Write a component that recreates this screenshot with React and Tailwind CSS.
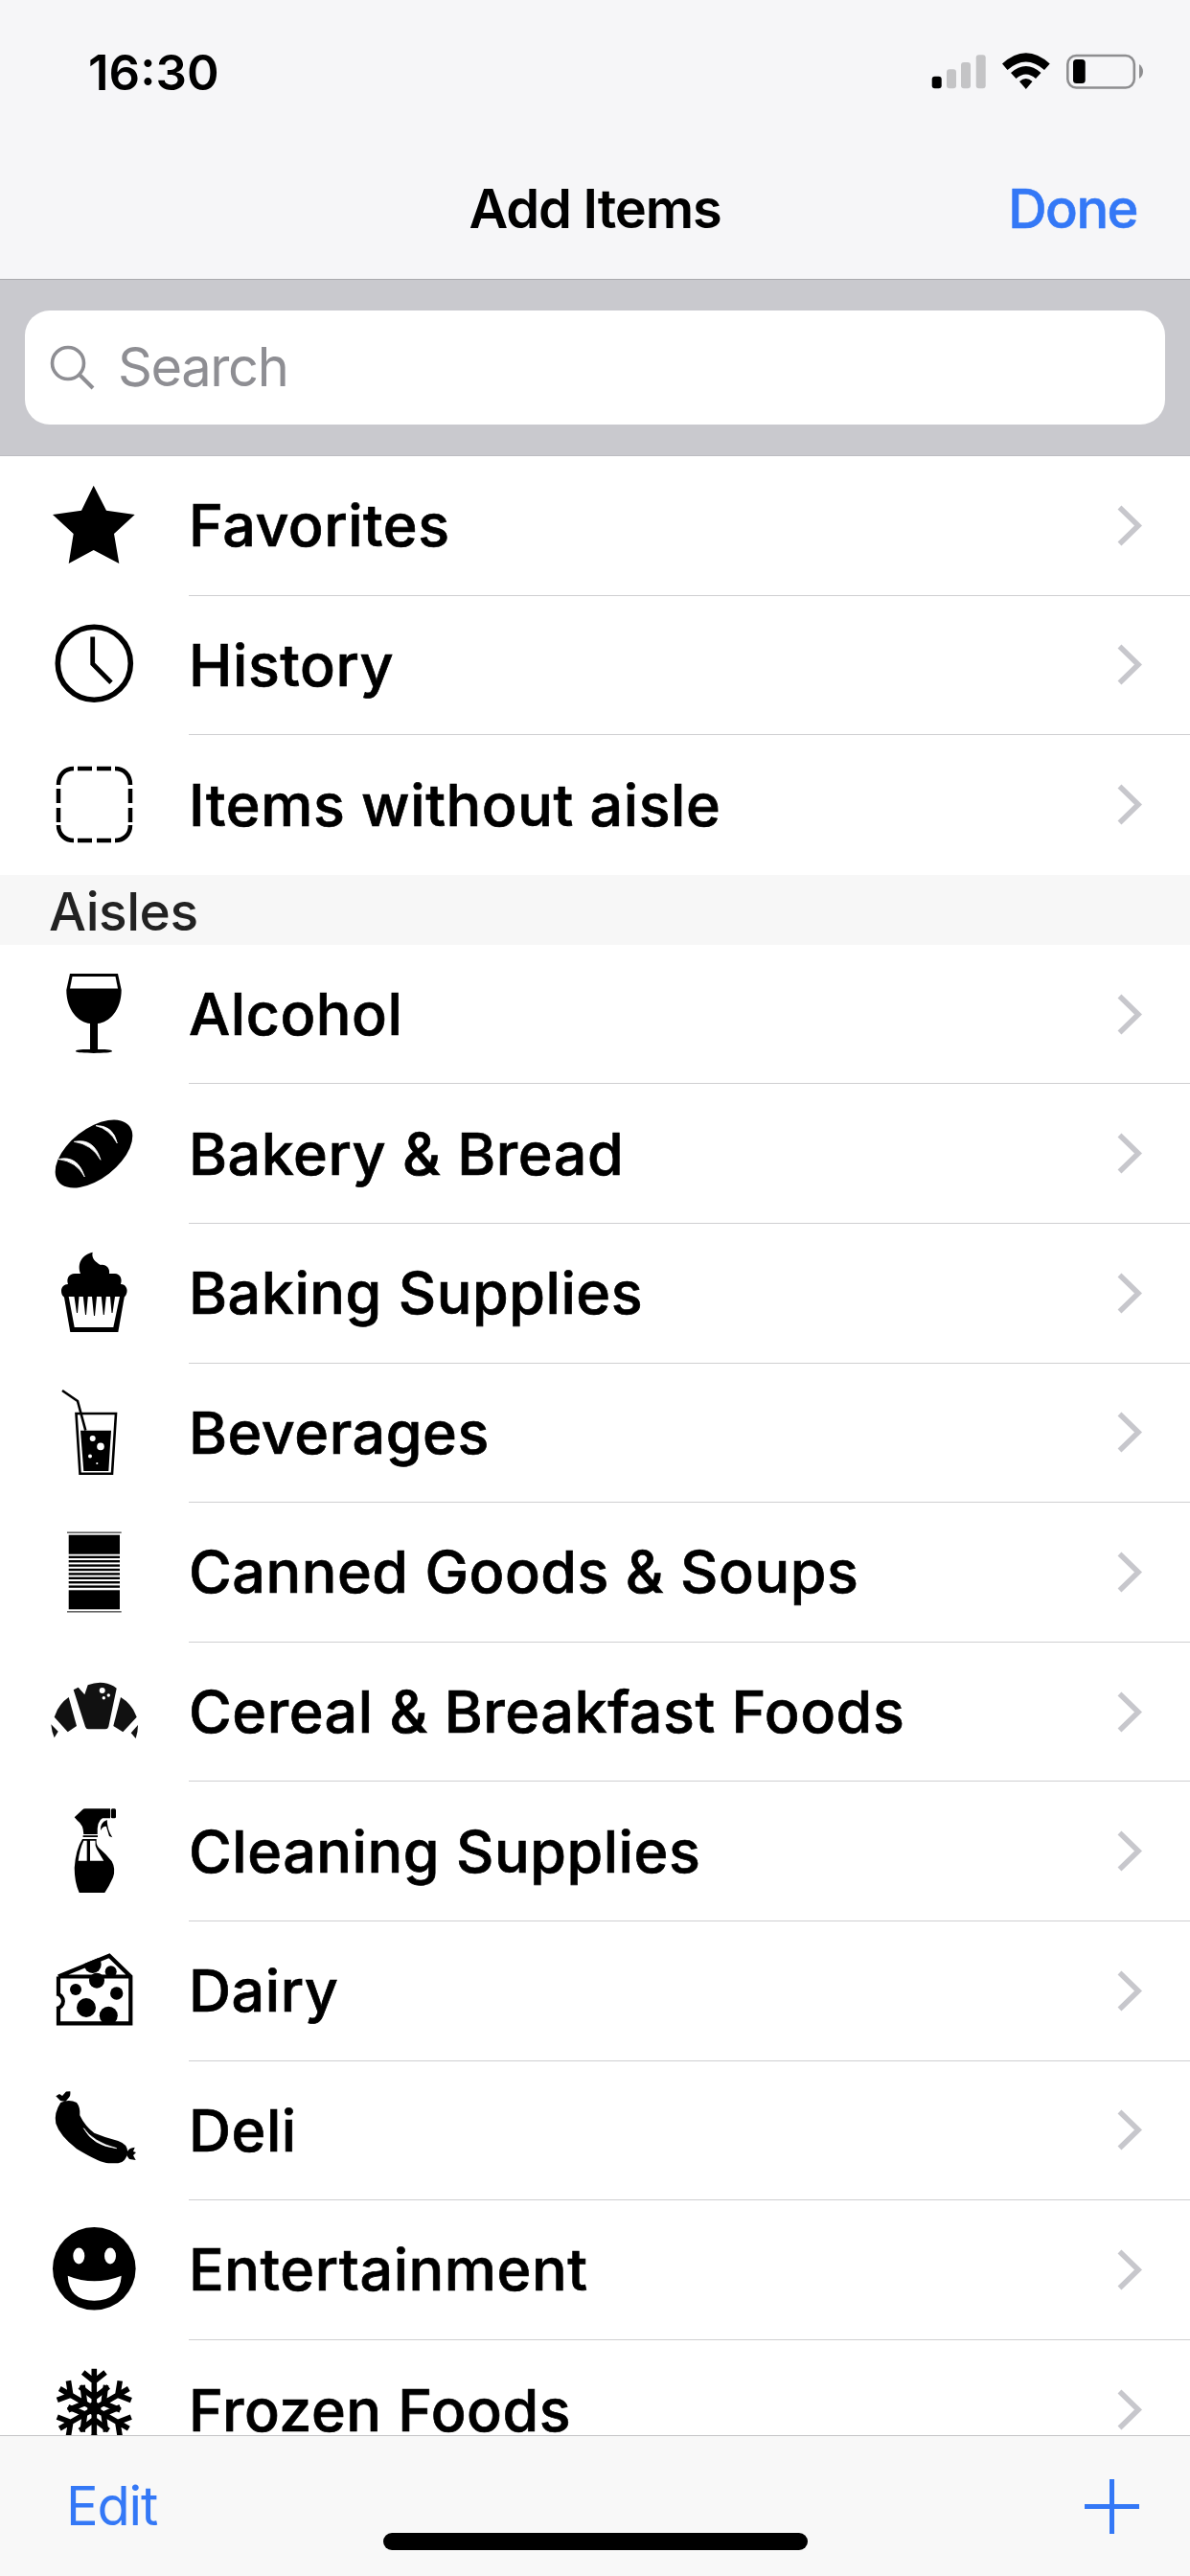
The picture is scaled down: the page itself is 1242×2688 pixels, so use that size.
import React from "react";

const I = ({ children }) => (
  <svg viewBox="0 0 100 100" className="w-[100px] h-[100px] shrink-0 overflow-visible" fill="#000">
    {children}
  </svg>
);

const Star = () => (
  <I><path d="M49.7 7.7 L63 33.7 L92.7 38 L71 58 L76.3 89 L49.7 75 L23.7 89 L28.7 58 L7 38 L37 33.7 Z" /></I>
);
const Clock = () => (
  <I>
    <circle cx="50.3" cy="48.2" r="38" fill="none" stroke="#000" strokeWidth="5.6" />
    <path d="M48.7 20.5 V48.8 L68 68.2" fill="none" stroke="#000" strokeWidth="4.8" />
  </I>
);
const Dashed = () => (
  <I>
    <path
      d="M13 29 C13 18 20 12 29 12 M33 12 H48 M53 12 H68 M72 12 C81 12 88 18 88 29 M88 33 V48 M88 53 V68 M88 71 C88 81 81 87 72 87 M68 87 H53 M48 87 H33 M29 87 C20 87 13 81 13 71 M13 68 V53 M13 48 V33"
      fill="none"
      stroke="#000"
      strokeWidth="4.5"
    />
  </I>
);
const Wine = () => (
  <I>
    <path d="M25 7 H75 L78.7 24 C78.7 45 66 58 54 59 V86 C60 86 69 86 69 88 C69 90.5 31 90.5 31 88 C31 86 40 86 46 86 V59 C34 58 21.3 45 21.3 24 Z" />
    <path d="M27.5 10 H72.5 L75 22.5 H25 Z" fill="#fff" />
  </I>
);
const Bread = () => (
  <I>
    <ellipse cx="50" cy="50" rx="47" ry="26" transform="rotate(-38 50 50)" />
    <path d="M13 55.6 Q33 51 40.3 74 Q32 58 13 55.6 Z" fill="#fff" stroke="#fff" strokeWidth="0.8" />
    <path d="M29.3 37.3 Q50 33 57 56.3 Q48 40 29.3 37.3 Z" fill="#fff" stroke="#fff" strokeWidth="0.8" />
    <path d="M52 20.6 Q70 20 74.3 38.9 Q66 24 52 20.6 Z" fill="#fff" stroke="#fff" strokeWidth="0.8" />
  </I>
);
const Cupcake = () => (
  <I>
    <path d="M48.7 6.7 C47 13 52 17 57 20 C63 19 67 24 66 29 H72 C77 29 80 34 78 40 C83 40 86 45 84 50 C83 53 81 54 79 54 H21 C18 54 16 51 16 47 C16 43 19 40 23 40 C21 34 24 29 30 29 H36 C32 18 38 9 48.7 6.7 Z" />
    <path d="M18.7 52 H82 L75.3 90 H25.3 Z" />
    <path d="M23.7 53 H77 L70.3 85 H29.7 Z" fill="#fff" />
    <path d="M29.5 53 H34.5 L33 70 H32 Z M38.8 53 H43.8 L42 72 H41 Z M48 53 H53 L51 73 H50 Z M57.8 53 H62.8 L60.8 72 H59.8 Z M67 53 H72 L69.5 70 H68.5 Z" />
  </I>
);
const Glass = () => (
  <I>
    <path d="M17 6 L33 17 L41.3 47.7" fill="none" stroke="#000" strokeWidth="2.6" />
    <path d="M31.5 30 H73 L69 92.8 H35.5 Z" fill="none" stroke="#000" strokeWidth="2.6" />
    <path d="M36 47.7 H68 L65.3 90 H39.3 Z" />
    <circle cx="48.7" cy="56" r="3" fill="#fff" />
    <circle cx="57" cy="64.4" r="3.8" fill="#fff" />
    <circle cx="46" cy="74.4" r="2" fill="#fff" />
    <circle cx="53.3" cy="82" r="1.1" fill="#fff" />
  </I>
);
const Can = () => (
  <I>
    <rect x="22" y="7.4" width="56.7" height="1.6" fill="#666" />
    <rect x="23.7" y="10.7" width="53.3" height="20" />
    <rect x="23.7" y="32.6" width="53.3" height="2.4" />
    <rect x="23.7" y="37" width="53.3" height="2.4" />
    <rect x="23.7" y="41.4" width="53.3" height="2.4" />
    <rect x="23.7" y="45.8" width="53.3" height="2.4" />
    <rect x="23.7" y="50.2" width="53.3" height="2.4" />
    <rect x="23.7" y="54.6" width="53.3" height="2.4" />
    <rect x="23.7" y="59" width="53.3" height="2.4" />
    <rect x="23.7" y="63.4" width="53.3" height="2.4" />
    <rect x="23.7" y="68.3" width="53.3" height="20" />
    <rect x="22" y="90" width="56.7" height="1.6" fill="#666" />
  </I>
);
const Croissant = () => (
  <I>
    <path d="M28.7 26.3 L33.7 23.7 L40.3 31.3 L43.7 21.3 Q52 18 60.3 19 Q68 20 73.7 24.7 L65.3 64.7 Q64.5 67.3 62 67.3 H44 Q42 67.3 41 64.7 Z" fill="#111" />
    <circle cx="58.7" cy="27" r="3" fill="#fff" />
    <circle cx="65.3" cy="32" r="1.7" fill="#fff" />
    <circle cx="60.3" cy="34.7" r="1.7" fill="#fff" />
    <path d="M23.7 34 L32 64 L22.7 70.3 L8.7 54.7 Q13 41 23.7 34 Z" fill="#111" />
    <path d="M78 34 L70.3 64 L80.3 70.3 L94.7 54.7 Q90 41 78 34 Z" fill="#111" />
    <path d="M5.3 62.3 L12.7 69.7 L8.7 76.3 Q6 70 5.3 62.3 Z" fill="#111" />
    <path d="M96 63 L88.7 71.3 L93.7 77 Q96 70 96 63 Z" fill="#111" />
  </I>
);
const Spray = () => (
  <I>
    <path d="M29.7 14.3 L38 6.5 Q39 5.3 41 5.3 H67 V15.3 H59 Q53 18 53.7 32 H39.3 Q39 22 33 18 Z" />
    <rect x="67.8" y="5.3" width="5.2" height="10" rx="1.5" />
    <path d="M63.7 17 Q56 20 57 28 Q60 23 63 24 L66 34 L69.3 35.3 Q64 28 63.7 17 Z" />
    <rect x="38.6" y="33.2" width="15.4" height="1.8" />
    <path d="M38 37 H52.7 Q52 43 55 46 Q62 52 68.7 60.3 Q73 68 70 77 Q66 86 61.3 93 H34.7 Q29.7 82 29.7 67 Q31 48 38 37 Z" />
    <path d="M39.3 38.7 H42.7 V59.7 H33.7 Q35 48 39.3 38.7 Z" fill="#fff" />
    <path d="M46 38.7 H51.5 Q51 44 53 47.5 L60.3 59.7 H46 Z" fill="#fff" />
  </I>
);
const Cheese = () => (
  <I>
    <defs>
      <clipPath id="cheese-clip">
        <path d="M11 33 L66.3 10.3 L90.3 33.7 V85.3 H11 Z" />
      </clipPath>
    </defs>
    <path d="M13 35 L65.8 13 L87.5 34 V83 H13.5 V35 Z" fill="#fff" />
    <g clipPath="url(#cheese-clip)">
      <circle cx="48.7" cy="22" r="9" />
      <circle cx="67.7" cy="29.3" r="6" />
      <circle cx="53" cy="38.7" r="8" />
      <circle cx="31" cy="48" r="6" />
      <circle cx="73.7" cy="52" r="6.7" />
      <circle cx="42" cy="67" r="10" />
      <circle cx="65.3" cy="75.3" r="9.5" />
    </g>
    <path d="M13 34.5 L66 12.8 L88.3 34.5 V83.3 H13 V68 M13 34.5 H88.3 M13 34.5 V52.5" fill="none" stroke="#000" strokeWidth="4.2" />
    <path d="M11 52.5 A7.8 7.8 0 0 1 11 68" fill="#fff" stroke="#000" strokeWidth="4" />
  </I>
);
const Sausage = () => (
  <I>
    <path d="M15.3 21 Q24 17 32 21 Q36 26 35.3 34.3 Q41 46 50.3 52.7 Q63 58 75.3 61 Q85 64 85.3 73 Q83 84 75.3 84.3 H66 Q58 85 32 69.3 Q14 55 10.3 42.7 Q8 32 15.3 21 Z" />
    <path d="M39.3 47.7 Q49 62 73.7 68.7 Q49 66 39.3 47.7 Z" fill="#fff" stroke="#fff" strokeWidth="0.7" />
    <path d="M10.3 14.3 L14 12 L17 14 L21 9.5 L25.3 9.3 Q26 14 23.7 16 L20.3 20 L15 19 Z" />
    <path d="M85 72 Q87 68 92.7 67.7 L91 72 L94 73 L91 76 L93.7 81 L87 80 L84 76 Z" />
  </I>
);
const Smile = () => (
  <I>
    <circle cx="50.3" cy="48.3" r="43.3" />
    <ellipse cx="34.3" cy="35" rx="6" ry="8.5" fill="#fff" />
    <ellipse cx="67" cy="35" rx="6" ry="8.5" fill="#fff" />
    <path d="M22.7 55.7 Q50.3 67 78.7 55.7 Q77 81.7 50.3 81.7 Q24 81.7 22.7 55.7 Z" fill="#fff" />
  </I>
);
const Arm = ({ a }) => (
  <g transform={`rotate(${a} 50.3 48.3)`}>
    <path
      d="M50.3 48.3 V6.7 M38.7 10.5 L50.3 20 L62 10.5 M35.3 25.5 L50.3 37 L65.3 25.5"
      fill="none"
      stroke="#000"
      strokeWidth="5.6"
    />
  </g>
);
const Flake = () => (
  <I>
    {[0, 60, 120, 180, 240, 300].map((a) => (
      <Arm key={a} a={a} />
    ))}
    <circle cx="50.3" cy="48.3" r="7" />
  </I>
);

const Chevron = () => (
  <svg viewBox="0 0 26 43" className="w-[26px] h-[43px] shrink-0 ml-auto mr-[50px]">
    <path d="M2.5 2.5 L22 21.5 L2.5 40.5" fill="none" stroke="#c7c7cc" strokeWidth="5.6" />
  </svg>
);

const Row = ({ icon: Icon, label, last }) => (
  <div className="flex h-[145.6px] items-center">
    <div className="ml-[48px] shrink-0">
      <Icon />
    </div>
    <div
      className={`ml-[49px] flex flex-1 items-center self-stretch ${last ? "" : "border-b-[1.5px] border-[#cfcfd1]"}`}
    >
      <span className="text-[61px] font-medium tracking-[0.55px] leading-[50px] text-black [-webkit-text-stroke:0.7px_#000]">
        {label}
      </span>
      <Chevron />
    </div>
  </div>
);

const top = [
  { icon: Star, label: "Favorites" },
  { icon: Clock, label: "History" },
  { icon: Dashed, label: "Items without aisle", last: true },
];
const aisles = [
  { icon: Wine, label: "Alcohol" },
  { icon: Bread, label: "Bakery & Bread" },
  { icon: Cupcake, label: "Baking Supplies" },
  { icon: Glass, label: "Beverages" },
  { icon: Can, label: "Canned Goods & Soups" },
  { icon: Croissant, label: "Cereal & Breakfast Foods" },
  { icon: Spray, label: "Cleaning Supplies" },
  { icon: Cheese, label: "Dairy" },
  { icon: Sausage, label: "Deli" },
  { icon: Smile, label: "Entertainment" },
  { icon: Flake, label: "Frozen Foods", last: true },
];

export default function App() {
  return (
    <div className="relative flex h-[2688px] w-[1242px] flex-col overflow-hidden bg-white font-['Inter',sans-serif]">
      <header className="shrink-0 border-b border-[#a9a9ad] bg-[#f6f6f8] pb-[5px]">
        <div className="flex h-[150px] items-center justify-between pl-[92px] pr-[49px]">
          <span className="text-[51px] font-semibold tracking-[0px] leading-none text-black">16:30</span>
          <svg viewBox="972 56 221 40" className="h-[40px] w-[221px]">
            <rect x="972.7" y="80.7" width="10" height="12.6" rx="3" fill="#000" />
            <rect x="988" y="73.3" width="10" height="20" rx="3" fill="#c4c4c6" />
            <rect x="1003" y="66" width="10" height="27.3" rx="3" fill="#c4c4c6" />
            <rect x="1018.7" y="58.3" width="10" height="35" rx="3" fill="#c4c4c6" />
            <path d="M1046 67.5 Q1070.8 45 1095.7 67.5 L1090 74 Q1070.8 57 1051.5 74 Z" fill="#000" />
            <path d="M1055 77 Q1070.8 63 1086.5 77 L1081 83 Q1070.8 74 1060.5 83 Z" fill="#000" />
            <path d="M1064 86 Q1070.8 80 1077.5 86 L1070.8 94 Z" fill="#000" />
            <rect x="1114.3" y="59" width="69.5" height="33.5" rx="9" fill="none" stroke="#8e8e90" strokeWidth="2.6" />
            <rect x="1120" y="63" width="12.7" height="25" rx="3.5" fill="#000" />
            <path d="M1189 68 Q1193 71 1193 75.5 Q1193 80 1189 83 Z" fill="#8e8e90" />
          </svg>
        </div>
        <div className="grid h-[136px] grid-cols-[1fr_auto_1fr] items-center">
          <span />
          <span className="whitespace-nowrap text-[56px] font-semibold tracking-[-1.2px] leading-none text-black">
            Add Items
          </span>
          <span className="pr-[55px] text-right text-[56px] font-medium tracking-[-1.5px] leading-none text-[#3478f6] [-webkit-text-stroke:0.6px_#3478f6]">
            Done
          </span>
        </div>
      </header>

      <div className="shrink-0 border-b border-[#bdbdc2] bg-[#c9c9ce] px-[26px] pb-[32px] pt-[32px]">
        <div className="flex h-[119px] items-center rounded-[26px] bg-white pl-[26px]">
          <svg viewBox="0 0 47 47" className="h-[47px] w-[47px] shrink-0">
            <circle cx="19" cy="19" r="16.5" fill="none" stroke="#8e8e93" strokeWidth="3.6" />
            <path d="M31 31 L45 45" fill="none" stroke="#8e8e93" strokeWidth="4" />
          </svg>
          <span className="mb-[2px] ml-[24px] text-[56px] tracking-[-1.4px] leading-none text-[#8e8e93]">Search</span>
        </div>
      </div>

      <main className="min-h-0 flex-1 overflow-hidden">
        {top.map((r) => (
          <Row key={r.label} {...r} />
        ))}
        <div className="flex h-[73px] items-center bg-[#f7f7f7] pl-[51px] pt-[4px]">
          <span className="text-[55px] font-medium tracking-[-0.5px] leading-none text-[#222]">Aisles</span>
        </div>
        {aisles.map((r) => (
          <Row key={r.label} {...r} />
        ))}
      </main>

      <footer className="flex h-[147px] shrink-0 items-center justify-between border-t-[1.5px] border-[#c4c4c6] bg-[#f8f8f8] pl-[69px] pr-[53px]">
        <span className="text-[56px] tracking-[-1.2px] leading-none text-[#3478f6]">Edit</span>
        <svg viewBox="0 0 57 57" className="h-[57px] w-[57px]">
          <path d="M28.5 0 V57 M0 28.5 H57" fill="none" stroke="#3478f6" strokeWidth="5" />
        </svg>
      </footer>
      <div className="absolute bottom-[27px] left-[400px] h-[18px] w-[443px] rounded-full bg-black" />
    </div>
  );
}
